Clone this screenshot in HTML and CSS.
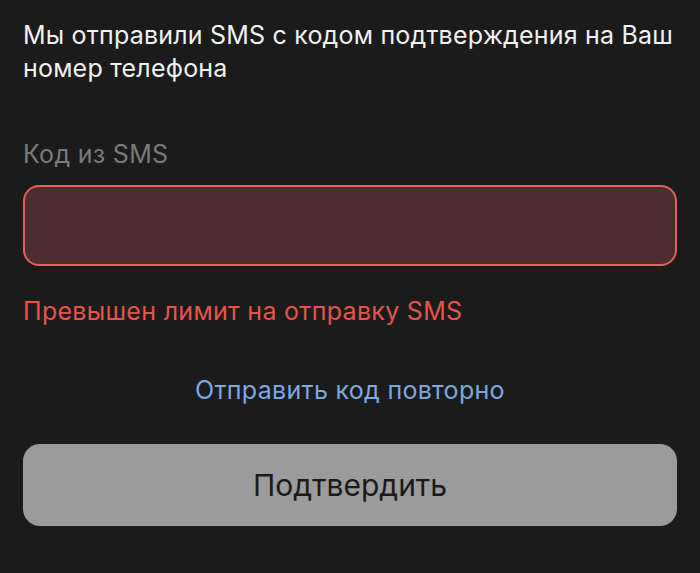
FILE: index.html
```html
<!DOCTYPE html>
<html lang="ru">
<head>
  <meta charset="UTF-8">
  <meta name="viewport" content="width=device-width, initial-scale=1.0">
  <title>Подтверждение номера</title>
  <link rel="stylesheet" href="styles.css">
</head>
<body>
  <main class="confirm">
    <p class="intro">Мы отправили SMS с кодом подтверждения на Ваш номер телефона</p>

    <form class="code-form">
      <label class="code-label" for="code">Код из SMS</label>
      <input class="code-input is-error" type="text" id="code" inputmode="numeric">
      <p class="code-error">Превышен лимит на отправку SMS</p>
      <a class="resend" href="#">Отправить код повторно</a>
      <button class="submit" type="button">Подтвердить</button>
    </form>
  </main>
</body>
</html>
```

FILE: styles.css
```css
body {
  margin: 0;
  background: #1b1b1b;
  color: #f2f2f2;
  font-family: Inter, "Liberation Sans", sans-serif;
  font-size: 25px;
  line-height: 33px;
  letter-spacing: 0.3px;
}
.confirm {
  padding: 19px 23px 0;
}
.intro {
  margin: 0 -14px 53px 0;
  letter-spacing: 0.2px;
}
.code-form {
  display: flex;
  flex-direction: column;
}
.code-label {
  color: #7a7a7a;
  margin-bottom: 14px;
}
.code-input {
  box-sizing: border-box;
  height: 81px;
  width: 100%;
  margin: 0;
  padding: 0 20px;
  border: 2px solid #4a4a4a;
  border-radius: 16px;
  background: #2a2a2a;
  color: #f2f2f2;
  font: inherit;
  outline: none;
}
.code-input.is-error {
  border-color: #e4605a;
  background: #4d2e30;
}
.code-error {
  margin: 29px 0 0;
  color: #e5544c;
}
.resend {
  align-self: center;
  margin-top: 46px;
  color: #7da8e2;
  text-decoration: none;
}
.submit {
  height: 82px;
  margin-top: 37px;
  border: none;
  border-radius: 17px;
  background: #9b9b9b;
  color: #1a1a1a;
  font-family: inherit;
  font-size: 30px;
  line-height: 36px;
  letter-spacing: 0;
  cursor: pointer;
}
```
